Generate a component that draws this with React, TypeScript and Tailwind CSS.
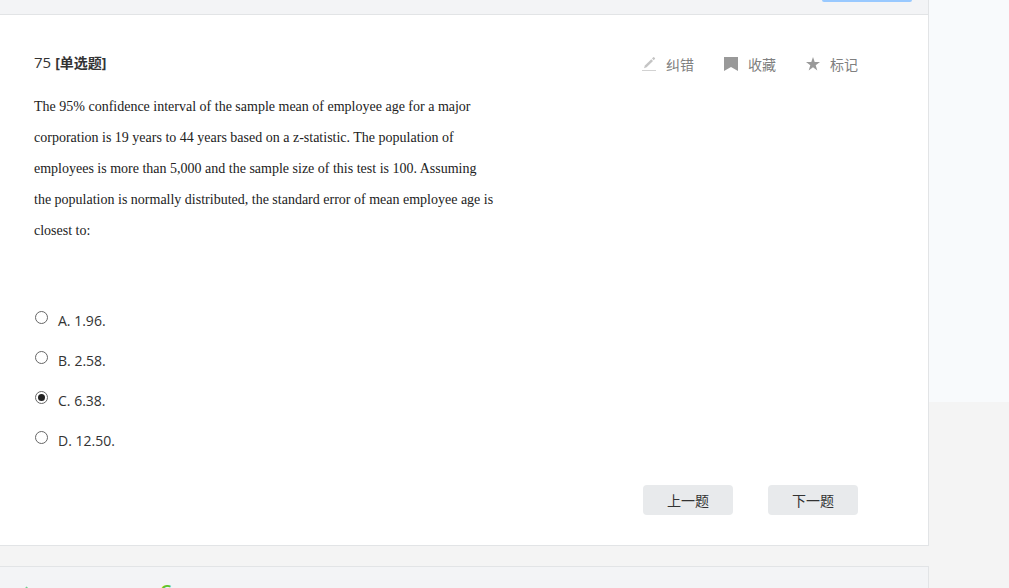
import { useState } from "react";

const OPTIONS = [
  { key: "A", text: "1.96." },
  { key: "B", text: "2.58." },
  { key: "C", text: "6.38." },
  { key: "D", text: "12.50." },
];

function PencilIcon() {
  return (
    <svg width="16" height="16" viewBox="0 0 16 16" aria-hidden="true">
      <path d="M3 12.2l.9-2.6 6.4-6.4 1.7 1.7-6.4 6.4z" fill="#c4c4c4" />
      <path d="M11 2.5l1.2-1.2q.6-.4 1.1.1l.6.6q.5.6 0 1.1l-1.2 1.1z" fill="#c4c4c4" />
      <path d="M1 14h14v1H1z" fill="#d2d2d2" />
    </svg>
  );
}

function BookmarkIcon() {
  return (
    <svg width="16" height="16" viewBox="0 0 16 16" aria-hidden="true">
      <path d="M1 1h14v14l-7-4-7 4z" fill="#999" />
    </svg>
  );
}

function StarIcon() {
  return (
    <svg width="16" height="16" viewBox="0 0 16 16" aria-hidden="true">
      <path d="M8 1l1.7 5H15l-4.3 3.2 1.6 5.3L8 11.3l-4.3 3.2 1.6-5.3L1 6h5.3z" fill="#999" />
    </svg>
  );
}

function CheckIcon() {
  return (
    <svg width="14" height="14" viewBox="0 0 14 14" aria-hidden="true">
      <path d="M1 7l4 5 6-11" fill="none" stroke="#6fcf8f" strokeWidth="2" />
    </svg>
  );
}

const ACTIONS = [
  { label: "纠错", icon: <PencilIcon /> },
  { label: "收藏", icon: <BookmarkIcon /> },
  { label: "标记", icon: <StarIcon /> },
];

export default function App() {
  const [answer, setAnswer] = useState("C");

  return (
    <div className="flex h-screen overflow-hidden bg-[#f4f4f4] font-['Open_Sans','Noto_Sans_CJK_SC',sans-serif] text-[#333]">
      <main className="flex flex-1 flex-col">
        {/* Toolbar, scrolled mostly out of view */}
        <div className="flex h-[15px] shrink-0 justify-end border-r border-b border-[#e2e4e6] bg-[#f3f4f6] pr-4">
          <div className="h-0.5 w-[90px] rounded-b bg-[#99c9ff]" />
        </div>

        <section className="shrink-0 border-r border-b border-[#e2e4e6] bg-white pt-9 pr-[70px] pb-[30px] pl-[34px]">
          <div className="flex items-start justify-between">
            <h1 className="text-sm leading-[22px]">
              <span className="mr-1 text-[15px] font-normal">75</span>
              <span className="font-bold">[单选题]</span>
            </h1>
            <div className="flex gap-[29px] pt-px">
              {ACTIONS.map((action) => (
                <button
                  key={action.label}
                  type="button"
                  className="flex items-center gap-[9px] text-sm leading-[26px] text-[#808080]"
                >
                  <span className="pb-0.5">{action.icon}</span>
                  {action.label}
                </button>
              ))}
            </div>
          </div>

          <p className="max-w-[462px] pt-[13px] font-['Liberation_Serif',serif] text-sm leading-[31px] text-[#222]">
            The 95% confidence interval of the sample mean of employee age for a major corporation is 19
            years to 44 years based on a z-statistic. The population of employees is more than 5,000 and the
            sample size of this test is 100. Assuming the population is normally distributed, the standard
            error of mean employee age is closest to:
          </p>

          <div className="pt-[54px]">
            {OPTIONS.map((option) => (
              <label key={option.key} className="flex h-10 items-start text-sm leading-[42px]">
                <input
                  type="radio"
                  name="answer"
                  value={option.key}
                  checked={answer === option.key}
                  onChange={() => setAnswer(option.key)}
                  className="mt-[11px] mr-[10px] ml-px grid size-[13px] shrink-0 appearance-none place-items-center rounded-full border border-[#666] bg-white before:size-[7px] before:rounded-full checked:before:bg-[#222]"
                />
                {option.key}. {option.text}
              </label>
            ))}
          </div>

          <div className="flex justify-end gap-[35px] pt-[25px]">
            <button type="button" className="h-[30px] w-[90px] rounded bg-[#e8eaec] pt-px text-sm">
              上一题
            </button>
            <button type="button" className="h-[30px] w-[90px] rounded bg-[#e8eaec] pt-px text-sm">
              下一题
            </button>
          </div>
        </section>

        {/* Answer bar */}
        <section className="mt-5 flex h-16 shrink-0 items-start border-t border-r border-[#e2e4e6] bg-[#f3f4f6] pt-4 pl-4">
          <span className="pt-[3px]">
            <CheckIcon />
          </span>
          <span className="ml-[130px] text-lg leading-4 font-semibold text-[#5fc52e]">C</span>
        </section>
      </main>

      <aside className="h-[402px] w-20 shrink-0 bg-[#f8fafc]" />
    </div>
  );
}
